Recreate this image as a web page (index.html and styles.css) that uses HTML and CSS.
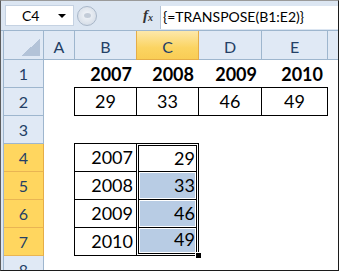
FILE: index.html
```html
<!DOCTYPE html>
<html lang="en">
<head>
  <meta charset="UTF-8" />
  <title>TRANSPOSE</title>
  <link rel="stylesheet" href="styles.css">
</head>
<body>

  <div class="window">

    <!-- Formula bar -->
    <div class="formula-bar">
      <div class="name-box">
        <span class="name">C4</span>
        <span class="drop"></span>
      </div>
      <div class="grip"><span class="grip-dot"></span></div>
      <div class="fx"><i>f</i><sub>x</sub></div>
      <div class="formula">{=TRANSPOSE(B1:E2)}</div>
    </div>

    <!-- Sheet -->
    <div class="sheet">
      <div class="grid">
        <div class="hd corner"><span class="tri"></span></div>
        <div class="hd">A</div>
        <div class="hd">B</div>
        <div class="hd on">C</div>
        <div class="hd">D</div>
        <div class="hd">E</div>
        <div class="hd"></div>

        <div class="rh">1</div>
        <div class="c"></div>
        <div class="c year">2007</div>
        <div class="c year">2008</div>
        <div class="c year">2009</div>
        <div class="c year">2010</div>
        <div class="c"></div>

        <div class="rh">2</div>
        <div class="c"></div>
        <div class="c box mid">29</div>
        <div class="c box mid">33</div>
        <div class="c box mid">46</div>
        <div class="c box mid">49</div>
        <div class="c"></div>

        <div class="rh">3</div>
        <div class="c"></div>
        <div class="c"></div>
        <div class="c"></div>
        <div class="c"></div>
        <div class="c"></div>
        <div class="c"></div>

        <div class="rh on">4</div>
        <div class="c"></div>
        <div class="c box num">2007</div>
        <div class="c"></div>
        <div class="c"></div>
        <div class="c"></div>

        <div class="rh on">5</div>
        <div class="c"></div>
        <div class="c box num">2008</div>
        <div class="c"></div>
        <div class="c"></div>
        <div class="c"></div>

        <div class="rh on">6</div>
        <div class="c"></div>
        <div class="c box num">2009</div>
        <div class="c"></div>
        <div class="c"></div>
        <div class="c"></div>

        <div class="rh on">7</div>
        <div class="c"></div>
        <div class="c box num">2010</div>
        <div class="c"></div>
        <div class="c"></div>
        <div class="c"></div>

        <div class="rh">8</div>

        <!-- selected range C4:C7 -->
        <div class="sel">
          <div class="sel-in">
            <div class="sc">29</div>
            <div class="sc hl">33</div>
            <div class="sc hl">46</div>
            <div class="sc hl">49</div>
          </div>
          <span class="handle"></span>
        </div>
      </div>
    </div>

  </div>

</body>
</html>
```

FILE: styles.css
```css
body {
  margin: 0;
  background: #fff;
}

.window {
  width: 339px;
  height: 271px;
  box-sizing: border-box;
  border: 1px solid #1c1c1c;
  border-top-color: #9a9a9a;
  border-left-color: #5c5c5c;
  overflow: hidden;
}

/* formula bar */
.formula-bar {
  height: 29px;
  display: flex;
  align-items: center;
  background: #dce6f2;
  padding-left: 4px;
}

.name-box {
  width: 69px;
  height: 21px;
  box-sizing: border-box;
  background: #fff;
  border: 1px solid #c5d2e2;
  display: flex;
  align-items: center;
  justify-content: space-between;
  padding: 0 7px 0 16px;
  font: 14px "Lato", sans-serif;
  color: #000;
}

.drop {
  width: 0;
  height: 0;
  border-left: 4px solid transparent;
  border-right: 4px solid transparent;
  border-top: 4px solid #000;
}

.grip {
  width: 20px;
  height: 20px;
  box-sizing: border-box;
  margin-left: 3px;
  border-radius: 50%;
  border: 1px solid #a9b7c9;
  background: radial-gradient(circle at 50% 45%, #f4f7fb 0, #dfe5ed 55%, #c9d3df 100%);
  display: flex;
  align-items: center;
  justify-content: center;
}

.grip-dot {
  width: 7px;
  height: 5px;
  border-radius: 50%;
  background: #c3ccd8;
}

.fx {
  margin-left: 46px;
  width: 17px;
  font: bold italic 15px "Liberation Serif", serif;
  color: #333;
}

.fx sub {
  font-size: 10px;
  vertical-align: baseline;
  position: relative;
  top: 1px;
}

.formula {
  flex: 1;
  align-self: stretch;
  margin: 5px 0 1px;
  background: #fff;
  border-left: 1px solid #b3c3d7;
  padding-left: 2px;
  font: 14px/22px "Lato", sans-serif;
  color: #000;
}

/* sheet */
.sheet {
  height: 240px;
  box-sizing: border-box;
  border-top: 1px solid #9eb6ce;
  padding-left: 2px;
  background: #dce6f2;
  overflow: hidden;
}

.grid {
  height: 100%;
  background: #fff;
  border-left: 1px solid #9eb6ce;
  display: grid;
  grid-template-columns: 40px 31px 62px 62px 63px 66px 62px;
  grid-template-rows: 29px repeat(8, 28px);
}

.hd, .rh {
  box-sizing: border-box;
  background: #e0e9f5;
  border-right: 1px solid #9eb6ce;
  border-bottom: 1px solid #9eb6ce;
  font: 16px "Lato", sans-serif;
  color: #243f66;
  text-align: center;
}

.hd {
  line-height: 32px;
}

.rh {
  line-height: 27px;
}

.hd.on {
  margin-left: -1px;
  border-left: 1px solid #e5ad48;
  border-right-color: #e5ad48;
  border-bottom-color: #e5ad48;
  background: linear-gradient(#fde8aa, #fbd462 60%, #f9cd55);
}

.rh.on {
  background: #ffd65f;
  border-right-color: #e5ad48;
  border-bottom-color: #e9b553;
}

.corner {
  display: flex;
  justify-content: flex-end;
  align-items: flex-end;
  padding: 0 3px 3px 0;
}

.tri {
  width: 19px;
  height: 17px;
  background: linear-gradient(to bottom right, transparent 50%, #b3c3d8 50%);
}

/* cells */
.c {
  font: 18px/28px "Lato", sans-serif;
  color: #000;
}

.year {
  font-weight: bold;
  text-align: right;
  padding-right: 5px;
}

.box {
  box-sizing: border-box;
  margin: -1px 0 0 -1px;
  border: 1px solid #000;
  line-height: 27px;
  background: #fff;
}

.mid {
  text-align: center;
}

.num {
  text-align: right;
  padding-right: 3px;
}

/* selected range */
.sel {
  grid-column: 4;
  grid-row: 5 / 9;
  margin: -1px 0 0 -1px;
  position: relative;
  border: 1px solid #000;
  padding: 1px;
  background: #fff;
}

.sel-in {
  border: 1px solid #000;
  display: grid;
  grid-template-rows: 25px 27px 27px 25px;
  row-gap: 1px;
  background: #000;
}

.sc {
  background: #fff;
  font: 18px "Lato", sans-serif;
  color: #000;
  text-align: right;
  padding-right: 1px;
  line-height: 27px;
}

.sc:first-child {
  line-height: 25px;
}

.sc:last-child {
  line-height: 23px;
}

.sc.hl {
  background: #b8cce4;
  box-shadow: inset 0 0 0 1px #fff;
}

.handle {
  position: absolute;
  right: -4px;
  bottom: -4px;
  width: 5px;
  height: 5px;
  background: #000;
  border: 1px solid #fff;
}
```
